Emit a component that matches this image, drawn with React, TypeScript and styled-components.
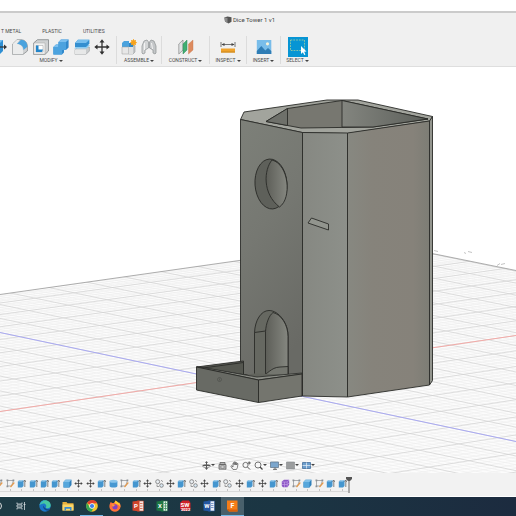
import React from "react";
import styled, { createGlobalStyle } from "styled-components";

const GlobalStyle = createGlobalStyle`
  * { box-sizing: border-box; }
  body { margin: 0; background: #fff; font-family: Roboto, "Liberation Sans", sans-serif; }
`;

const Page = styled.main`
  display: flex;
  flex-direction: column;
  height: 100vh;
  overflow: hidden;
  color: #4a4a4a;
`;

const Header = styled.header`
  margin-top: 11px;
  border-top: 2px solid #cbcbcb;
  border-bottom: 1px solid #dedede;
  background: #f0f0f0;
  flex: none;
`;

const TitleBar = styled.div`
  height: 13px;
  display: flex;
  align-items: center;
  justify-content: center;
  gap: 1px;
  padding-right: 17px;
`;

const Title = styled.h1`
  margin: 0;
  font-size: 6px;
  line-height: 8px;
  font-weight: 400;
  color: #444;
`;

const PlainButton = styled.button`
  border: 0;
  padding: 0;
  margin: 0;
  background: none;
  color: inherit;
  font-family: inherit;
  display: flex;
  align-items: center;
  justify-content: center;
  flex: none;
`;

const Tabs = styled.nav`
  height: 10px;
  display: flex;
  align-items: center;
  gap: 21px;
  padding-left: 1px;
`;

const Tab = styled(PlainButton)`
  font-size: 5px;
  line-height: 8px;
  white-space: nowrap;
`;

const Ribbon = styled.div`
  height: 30px;
  display: flex;
  align-items: flex-start;
  margin-left: -14px;
`;

const Group = styled.section<{ $width: number; $last?: boolean }>`
  flex: none;
  width: ${(p) => p.$width}px;
  height: 28px;
  padding-top: 1px;
  display: flex;
  flex-direction: column;
  align-items: center;
  border-right: 1px solid ${(p) => (p.$last ? "transparent" : "#dcdcdc")};
`;

const GroupTools = styled.div<{ $width?: number }>`
  height: 20px;
  flex: none;
  width: ${(p) => (p.$width ? p.$width + "px" : "auto")};
  display: flex;
  align-items: center;
  justify-content: space-between;
  gap: 4px;
`;

const GroupLabel = styled(PlainButton)`
  font-size: 5px;
  line-height: 7px;
  gap: 1px;
  white-space: nowrap;
`;

const Caret = styled.span`
  border: 2px solid transparent;
  border-top-color: #444;
  border-bottom: 0;
  height: 2px;
`;

const Viewport = styled.section`
  position: relative;
  flex: 1;
  min-height: 0;
  background: #fff;
`;

const Scene = styled.svg`
  display: block;
  width: 100%;
  height: 100%;
`;

const ViewTools = styled.div`
  position: absolute;
  left: 0;
  right: 0;
  bottom: 2px;
  height: 12px;
  display: flex;
  align-items: center;
  justify-content: center;
  gap: 3px;
`;

const ViewButton = styled(PlainButton)`
  gap: 0;
`;

const Timeline = styled.section`
  height: 24px;
  flex: none;
  background: #f2f2f2;
  border-bottom: 1px solid #fff;
  display: flex;
`;

const Features = styled.div`
  width: 355px;
  margin-left: -7px;
  flex: none;
  display: flex;
`;

const Feature = styled(PlainButton)`
  flex: 1;
  height: 19px;
  padding-top: 6px;
  flex-direction: column;
  justify-content: space-between;
  border-bottom: 1px solid #dadada;
`;

const Tick = styled.span`
  width: 1px;
  height: 2px;
  background: #c4c4c4;
`;

const Marker = styled(PlainButton)`
  width: 6px;
  margin-left: -2px;
  align-items: flex-start;
  padding-top: 4px;
`;

const Taskbar = styled.nav`
  height: 19px;
  flex: none;
  background: linear-gradient(90deg, #1d3b45, #1b3543 55%, #1c2b3f);
`;

const TaskItems = styled.div`
  width: 258px;
  height: 19px;
  margin-left: -14px;
  display: flex;
`;

const Task = styled(PlainButton)<{ $state?: "running" | "active" }>`
  flex: 1;
  background: ${(p) => (p.$state === "active" ? "#49606b" : "none")};
  border-bottom: ${(p) => (p.$state ? "1px solid #74b9e8" : "1px solid transparent")};
`;

/* ---------- ribbon icons ---------- */

const ribbonArt: Record<string, React.ReactNode> = {
  press: (
    <>
      <path d="M0 4l4-3h7v11l-3 3H0z" fill="#2f8fd3" />
      <path d="M0 4l4-3h7l-3 3z" fill="#74bdf0" />
      <path d="M8 8h5" stroke="#333" fill="none" strokeWidth="1.200" />
      <path d="M12 5.500L15 8l-3 2.500z" fill="#333" />
    </>
  ),
  fillet: (
    <>
      <path d="M.6 5L5 .8h4c4 0 6.400 3 6.400 7V12L11 15.400H.6z" fill="#cfd1d2" stroke="#7e8284" strokeWidth=".7" />
      <path d="M.8 5l4-4h3c-1 1-2 2-3 4 4 0 6.200 3 6.200 7v3.200H.8z" fill="#ebecec" />
      <path d="M9 .8c4 0 6.400 3 6.400 7L11.500 11C11.500 7.500 9 5 5 5z" fill="#4aa3de" />
    </>
  ),
  shell: (
    <>
      <path d="M.6 4L4.500.7h11V12L12 15.400H.6z" fill="#cfd1d2" stroke="#74797b" strokeWidth=".7" />
      <path d="M.8 4H12v11.200H.8z" fill="#f1f1f1" stroke="#999" strokeWidth=".4" />
      <path d="M3 6.500h7v6.500H3z" fill="#fff" stroke="#888" strokeWidth=".4" />
      <path d="M3 6.500l2.500 0V10.500H10L9 13H3z" fill="#2385ca" />
    </>
  ),
  combine: (
    <>
      <path d="M5.500 3L8 .6h7.600v8L13 11h-2v2.500L9 15.500H.4V8L3 5.500h2.500z" fill="#3189cc" />
      <path d="M5.500 3L8 .6h7.600L13 3zM.4 8L3 5.500h2.500V8z" fill="#7cc0ef" />
      <path d="M5.500 3H13v8H9v4.500H.4V8h5.100z" fill="#4ca3df" />
    </>
  ),
  split: (
    <>
      <path d="M1 10.500L4 8h11.400v4L12 15.400H1z" fill="#c9cccd" stroke="#8a8d8f" strokeWidth=".5" />
      <path d="M1 10.500h11v4.900H1z" fill="#e7e8e8" />
      <path d="M0 9.500L4 6h12l-3.500 3.500z" fill="#8accf3" />
      <path d="M1 4L4 .8h11.400v4L12 8H1z" fill="#348fd0" />
      <path d="M1 4L4 .8h11.400L12 4z" fill="#78bfee" />
    </>
  ),
  move: (
    <>
      <path d="M8 2v12M2 8h12" stroke="#333" strokeWidth="1.300" />
      <path d="M8 .3l2.500 3.200h-5zM8 15.700l2.500-3.200h-5zM.3 8l3.200-2.500v5zM15.700 8l-3.200-2.500v5z" fill="#2f2f2f" />
    </>
  ),
  component: (
    <>
      <path d="M1 4l2-2h5v6H1z" fill="#4ba2dd" />
      <path d="M1 8h6.500v7H1z" fill="#e7e7e7" stroke="#999" strokeWidth=".5" />
      <path d="M7.500 8L9 6.500h5V13l-2 2H7.500z" fill="#c3c6c8" stroke="#8b8e90" strokeWidth=".5" />
      <path d="M7.500 8H12v7H7.500z" fill="#e0e1e1" />
      <path d="M8 4h4v4H8z" fill="#2f87c8" />
      <circle cx="12.500" cy="3.600" r="2.500" fill="#f6a21b" />
      <path d="M12.500 0v7.200M9 3.600h7M10 1l5 5M15 1l-5 5" stroke="#f6a21b" strokeWidth=".8" />
    </>
  ),
  joint: (
    <>
      <path d="M1 14V7l2-5 3-1 1.500 2v6L4 11v3l-2 1z" fill="#d3d5d6" stroke="#8b8f91" strokeWidth=".7" />
      <path d="M15 14V7l-2-5-3-1-1.500 2v6L12 11v3l2 1z" fill="#c3c6c8" stroke="#8b8f91" strokeWidth=".7" />
      <path d="M3.500 4v7M10.500 4l1 6" stroke="#f4f4f4" />
    </>
  ),
  construct: (
    <>
      <path d="M.8 5L5 1v10L.8 15z" fill="#dfe2e3" stroke="#777" strokeWidth=".6" />
      <path d="M5 5l4-4v10l-4 4z" fill="#3fae72" stroke="#318858" strokeWidth=".5" />
      <path d="M10.500 5L15 1v10l-4.500 4z" fill="#dd8a5e" stroke="#c57649" strokeWidth=".4" />
    </>
  ),
  measure: (
    <>
      <path d="M1 3v5M15 3v5M2 5.500h12" stroke="#555" strokeWidth=".8" />
      <path d="M1.500 5.500l3-1.500v3zM14.500 5.500l-3-1.500v3z" fill="#444" />
      <path d="M1 9.500h14v4H1z" fill="#f0a32c" />
      <path d="M1 12.500h14v1H1z" fill="#c8861f" />
    </>
  ),
  image: (
    <>
      <path d="M.8 1h14.500v14H.8z" fill="#79bdea" />
      <circle cx="11.500" cy="4.800" r="1.600" fill="#f7f3d9" />
      <path d="M.8 12l4.500-5 4 4.500L12 9l3.300 3v3H.8z" fill="#2f7db5" />
    </>
  ),
  select: (
    <>
      <path d="M0 0h20v20H0z" fill="#0795d4" />
      <path d="M2.500 3h14v10.500h-14z" fill="none" stroke="#a8cfa0" strokeWidth=".8" strokeDasharray="1.800 1" />
      <path d="M13 9l5.500 5.500-2.400.2 1.300 2.700-1.200.6-1.300-2.700L13 17z" fill="#fff" />
    </>
  ),
};

function RibbonIcon({ name }: { name: string }) {
  const size = name === "select" ? 20 : 16;
  return (
    <svg width={size} height={size} viewBox={`0 0 ${size} ${size}`} aria-hidden="true">
      {ribbonArt[name]}
    </svg>
  );
}

const groups = [
  { label: "MODIFY", width: 131, toolsWidth: 118, tools: ["press", "fillet", "shell", "combine", "split", "move"] },
  { label: "ASSEMBLE", width: 45, tools: ["component", "joint"] },
  { label: "CONSTRUCT", width: 48, tools: ["construct"] },
  { label: "INSPECT", width: 37, tools: ["measure"] },
  { label: "INSERT", width: 34, tools: ["image"] },
  { label: "SELECT", width: 34, tools: ["select"] },
];

/* ---------- scene ---------- */

const redLeft = (k: number) => 411 + 15.8 * k + 0.28 * k * k;
const redRight = (k: number) => 335 + 15 * k + 0.26 * k * k;
const blueLeft = (m: number) => 332 + 14.2 * m + 0.1 * m * m;
const blueRight = (m: number) => 441 + 14.4 * m + 0.1 * m * m;

function gridPath(major: boolean) {
  const parts: string[] = [];
  const sweep = (from: number, to: number, l: (n: number) => number, r: (n: number) => number) => {
    for (let i = from * 5; i <= to * 5; i++) {
      if ((i % 5 === 0) !== major) continue;
      parts.push(`M0 ${l(i / 5).toFixed(1)}L516 ${r(i / 5).toFixed(1)}`);
    }
  };
  sweep(-9, 9, redLeft, redRight);
  sweep(-13, 10, blueLeft, blueRight);
  return parts.join("");
}

const minorGrid = gridPath(false);
const majorGrid = gridPath(true);

function DiceTower() {
  return (
    <Scene viewBox="0 66 516 407" preserveAspectRatio="xMidYMid slice" role="img" aria-label="Dice tower model">
      <defs>
        <clipPath id="ground">
          <path d="M0 294L373 241L516 270V473H0z" />
        </clipPath>
        <linearGradient id="leftFace" x1="0" y1="0" x2=".3" y2="1">
          <stop offset="0" stopColor="#7d8079" />
          <stop offset=".45" stopColor="#767872" />
          <stop offset="1" stopColor="#696a65" />
        </linearGradient>
        <linearGradient id="midFace" x1="0" y1="0" x2="1" y2="0">
          <stop offset="0" stopColor="#868882" />
          <stop offset="1" stopColor="#8d908a" />
        </linearGradient>
        <linearGradient id="rightFace" x1="0" y1="0" x2="1" y2="0">
          <stop offset="0" stopColor="#878881" />
          <stop offset=".3" stopColor="#86837b" />
          <stop offset=".8" stopColor="#86827a" />
          <stop offset="1" stopColor="#7d7d75" />
        </linearGradient>
        <linearGradient id="bore" x1="0" y1="0" x2="1" y2="0">
          <stop offset="0" stopColor="#5d5e58" />
          <stop offset="1" stopColor="#858780" />
        </linearGradient>
        <linearGradient id="innerBack" x1="0" y1="0" x2="1" y2="0">
          <stop offset="0" stopColor="#83857f" />
          <stop offset="1" stopColor="#5c5f5a" />
        </linearGradient>
      </defs>
      <rect y="66" width="516" height="407" fill="#fff" />
      <g clipPath="url(#ground)" fill="none">
        <rect y="230" width="516" height="243" fill="#fcfcfc" />
        <path d={minorGrid} stroke="#ececec" strokeWidth=".6" />
        <path d={majorGrid} stroke="#d0d0d0" strokeWidth=".7" />
        <path d="M0 411L516 335" stroke="#f3aaa7" />
        <path d="M0 332L516 441" stroke="#a9a9f2" />
      </g>
      <path d="M0 294L373 241L516 270" fill="none" stroke="#999" strokeWidth=".8" />
      <path d="M434 250l4 1M464 252l2 1M468 251l4 1M497 265l3-2M501 264l4-1" fill="none" stroke="#aaa" strokeWidth=".7" />

      <g stroke="#2a2b28" strokeWidth=".9" strokeLinejoin="round">
        <path d="M240.500 119L244 111.500L327 99.500H358L432.500 116L430 120.500L347.500 133L302 132z" fill="#a2a49d" />
        <path d="M266 121L287.500 108L342 100L428 118.500L373 126.500L301 127.500z" fill="#777770" />
        <path d="M266 121L287.500 108V125z" fill="#6e706a" />
        <path d="M342 100L428 118.500L373 126.500H342z" fill="url(#innerBack)" />
        <path d="M240.500 119L302.500 132V395.500L240.500 382z" fill="url(#leftFace)" />
        <path d="M302.500 132L347.500 132.500V396.500L302.500 395.500z" fill="url(#midFace)" />
        <path d="M347.500 132.500L429.500 120.500V384.500L347.500 396.500z" fill="url(#rightFace)" />
        <path d="M429.500 120.500L432.500 116V380L429.500 384.500z" fill="#93958e" />
        <ellipse cx="271" cy="183.500" rx="16" ry="25" transform="rotate(-4 271 183.500)" fill="#5e605a" />
        <path d="M272 159.500C264 169 262 193 279.500 206.500C292 198 289 164 272 159.500z" fill="url(#bore)" />
        <path d="M308 222.500L311.500 217.500L328.500 223.500V229.500z" fill="#92958e" />

        <path d="M254.500 376V332C255 320 261 310 269 310C279 310 288 323 288 335V374z" fill="#666861" />
        <path d="M265.500 374V331C266 323 269 315 273 312C281 314 288 324 288 336V374z" fill="url(#bore)" />
        <path d="M254.500 332L265.500 330.500" />
        <path d="M258 377C269 374 270 367 280 366.500L288 366V375z" fill="#74766f" />

        <path d="M196.500 366.500L243.500 360.500V376L257 378L302 373L258.500 379.500z" fill="#5a5c56" />
        <path d="M203 367.500L243.500 362V374L257.500 376.500z" fill="#555750" />
        <path d="M243.500 375L254 373L288 374L302 373L258 378z" fill="#62645d" stroke="none" />
        <path d="M196.500 366.500L203 367L257 376.500L302 372.500V373.500L258.500 379.500z" fill="#8b8d86" strokeWidth=".8" />
        <path d="M196.500 366.500L258.500 379.500V402L196.500 389.500z" fill="#686a64" />
        <path d="M258.500 379.500L302 373.500V395.500L258.500 402z" fill="#74756e" />
      </g>
      <circle cx="219.500" cy="379" r="2" fill="none" stroke="#4a4b48" strokeWidth=".6" />
      <path d="M219.500 378v2" stroke="#4a4b48" strokeWidth=".6" />
    </Scene>
  );
}

/* ---------- view tools ---------- */

const viewArt: Record<string, React.ReactNode> = {
  orbit: (
    <>
      <path d="M4.500 1v7M1 4.500h7" stroke="#555" strokeWidth="1" />
      <path d="M4.500 0L6 2H3zM4.500 9L6 7H3z" fill="#555" />
      <ellipse cx="4.500" cy="5" rx="4" ry="1.500" fill="none" stroke="#666" strokeWidth=".7" />
    </>
  ),
  look: (
    <>
      <path d="M1 3.500h7v4.700H1zM2 1.500h5v2H2z" fill="#b5b5b5" stroke="#666" strokeWidth=".8" />
      <path d="M3 5h3v2H3z" fill="#eee" stroke="#666" strokeWidth=".5" />
    </>
  ),
  pan: (
    <path d="M3 8.500L.8 5.200l1-.5L3 6V2l1-.2.2 2V1l1-.2.2 3L5.700 1.500l.9.100V4l.5-1.500.9.200-.6 4-1 1.800z" fill="#f3f3f3" stroke="#555" strokeWidth=".7" />
  ),
  zoom: (
    <>
      <circle cx="3.500" cy="4" r="2.600" fill="none" stroke="#666" strokeWidth=".9" />
      <path d="M5.500 6L8 8.500M7.200.5v3M5.800 2h3" stroke="#555" strokeWidth="1" />
    </>
  ),
  fit: (
    <>
      <circle cx="4" cy="4" r="3" fill="#f8f8f8" stroke="#666" strokeWidth=".9" />
      <path d="M6 6l2.500 2.500" stroke="#444" strokeWidth="1.300" />
    </>
  ),
  display: (
    <>
      <path d="M.5 1h8v5.500h-8z" fill="#7ba6cd" stroke="#667b91" strokeWidth=".8" />
      <path d="M3 8.300h4M5 6.500v2" stroke="#666" />
    </>
  ),
  effects: <path d="M.5 1h8v7h-8z" fill="#9b9d9e" stroke="#85888a" strokeWidth=".6" />,
  viewports: (
    <>
      <path d="M.5 1.500h8v6h-8z" fill="#6b9dcc" stroke="#456f9c" strokeWidth=".8" />
      <path d="M4.500 1.500v6M.5 4.500h8" stroke="#e8f0f8" strokeWidth=".7" />
    </>
  ),
};

const viewTools: [string, boolean][] = [
  ["orbit", true],
  ["look", false],
  ["pan", false],
  ["zoom", false],
  ["fit", true],
  ["display", true],
  ["effects", true],
  ["viewports", true],
];

/* ---------- timeline ---------- */

const featureArt: Record<string, React.ReactNode> = {
  sketch: (
    <>
      <path d="M1.500 1.500h6l-2 5.500h-4z" fill="none" stroke="#8a8d90" strokeWidth=".7" />
      <path d="M.5.500h1.800v1.800H.5zM6.500.500h1.800v1.800H6.500zM.5 6.500h1.800v1.800H.5z" fill="#8a9095" />
      <path d="M4.500 8L8.300 3.500" stroke="#e59a4c" strokeWidth="1.200" />
    </>
  ),
  extrude: (
    <>
      <path d="M.8 2.500L2.500 1H6.500v6L5 8.500H.8z" fill="#4596cf" />
      <path d="M.8 2.500L2.500 1H6.500L5 2.500z" fill="#9ccbeb" />
      <path d="M7.800 8V2.500M6.700 3L7.800 1l1 2" stroke="#555" strokeWidth=".7" fill="none" />
    </>
  ),
  box: (
    <>
      <path d="M.5 3L2.500.700h6V6L6.500 8.500h-6z" fill="#2f7fb9" />
      <path d="M.5 3h6v5.500h-6z" fill="#56a7dc" />
      <path d="M.5 3L2.500.700h6L6.500 3z" fill="#83c1e9" />
    </>
  ),
  cylinder: (
    <>
      <path d="M.6 2.300v4.600c0 2 7.800 2 7.800 0V2.300z" fill="#4798d2" />
      <ellipse cx="4.500" cy="2.300" rx="3.900" ry="1.500" fill="#8bc5eb" />
    </>
  ),
  move: (
    <>
      <path d="M4.500 1.500v6M1.500 4.500h6" stroke="#444" strokeWidth=".8" />
      <path d="M4.500.300L6 2.200H3zM4.500 8.700L6 6.800H3zM.3 4.500L2.200 3v3zM8.700 4.500L6.800 3v3z" fill="#444" />
    </>
  ),
  link: (
    <>
      <circle cx="2.700" cy="2.700" r="2" fill="#e9eef2" stroke="#777" strokeWidth=".8" />
      <circle cx="6.500" cy="6.500" r="1.800" fill="#d8e7f2" stroke="#777" strokeWidth=".8" />
      <path d="M2 5.500v2h2M6 1.200l2 1.500" stroke="#777" strokeWidth=".7" fill="none" />
    </>
  ),
  form: (
    <>
      <path d="M.8 2.500L3 .700h5.200v5L6.500 8.300H2L.8 7z" fill="#8b56c5" />
      <path d="M.8 3h5.400v5M6.200 3L8 1M.8 5.500h5.400l2-1.500M3.500 3v5" stroke="#c9a5ea" strokeWidth=".6" fill="none" />
    </>
  ),
};

const features =
  "sketch sketch extrude extrude extrude extrude box move move extrude cylinder sketch extrude move link move extrude link move extrude link move extrude move extrude form sketch box sketch extrude extrude".split(
    " "
  );

/* ---------- taskbar ---------- */

type TaskEntry = { name: string; state?: "running" | "active"; art: React.ReactNode };

const officeText = { fontFamily: "Roboto, sans-serif", fontWeight: 700, fill: "#fff" };

const tasks: TaskEntry[] = [
  { name: "Search", art: <circle cx="6" cy="6" r="3.500" fill="none" stroke="#ddd" /> },
  {
    name: "Task View",
    art: (
      <path d="M2 2.500v1.500h5V2.500M2 9.500V8h5v1.500M2 5h5v2H2zM9.500 2v8M8.500 4.500h2" fill="none" stroke="#d4dcdf" strokeWidth=".8" />
    ),
  },
  {
    name: "Edge",
    art: (
      <>
        <circle cx="6" cy="6" r="5.700" fill="#1b77c9" />
        <path d="M.4 5.500C1 2 3.500.300 6 .300c3.500 0 5.700 2.500 5.700 5 0 2-1.500 3-3.200 3-1.400 0-2-.6-1.500-1.300C8 5.500 6.500 3.500 4.500 3.500c-2 0-3.400 1-4.100 2z" fill="#46c8a2" />
        <path d="M.4 5.500C1 2 3.500.300 6 .300 5 .500 2 3 .4 5.500z" fill="#2ba7dd" />
        <path d="M4.500 5.500c-1 2 .5 5 4.500 5.300 1-.6 1.700-1.300 2-2-2 1-5.500.2-6.500-3.300z" fill="#12498b" />
      </>
    ),
  },
  {
    name: "File Explorer",
    art: (
      <>
        <path d="M.5 2h4l1 1.200h6V10.500H.5z" fill="#e8b13c" />
        <path d="M.5 4.500h11v6H.5z" fill="#fbd768" />
        <path d="M2.500 7h7v3.500H8V8.800H4v1.700H2.500z" fill="#3a8dce" />
      </>
    ),
  },
  {
    name: "Chrome",
    state: "running",
    art: (
      <>
        <circle cx="6" cy="6" r="5.800" fill="#f5c52d" />
        <path d="M6 6L1 3a5.800 5.800 0 0 1 10.200.3L6 3.500z" fill="#e2402f" />
        <path d="M1 3a5.800 5.800 0 0 0 4.500 8.800L8 7 4 7.500z" fill="#35a753" />
        <circle cx="6" cy="6" r="2.700" fill="#fff" />
        <circle cx="6" cy="6" r="2.100" fill="#3f80e8" />
      </>
    ),
  },
  {
    name: "Firefox",
    art: (
      <>
        <path d="M6.500.500c1 1 1.500 1.500 3 2.500l.7-.5C11.500 4 11.800 5.500 11.500 7 11 10 8.500 11.700 6 11.700 3 11.700.5 9.500.4 6.500.4 4.500 1 3 2 1.700l.8 1.300L5 3z" fill="#ff7139" />
        <path d="M6.500.500C8.500 2 11.500 3 11.300 7 10.500 5 9 4.500 8 4.300L5.500 3z" fill="#ffca2f" />
        <circle cx="6" cy="6.800" r="2.600" fill="#8142c4" />
        <path d="M2.500 4.500C4 4 5 4.500 6.500 5.200 5 5.500 4.500 6 4 7z" fill="#ff9b36" />
      </>
    ),
  },
  {
    name: "PowerPoint",
    art: (
      <>
        <path d="M5 1h6.500v10H5z" fill="#f3e6e2" stroke="#c94b32" strokeWidth=".6" />
        <path d="M8 3.500h2.500M8 6h2.500M8 8.500h2.500" stroke="#d35a3f" strokeWidth=".8" />
        <path d="M.5 1.500L7.500.500v11l-7-1z" fill="#d0432a" />
        <text x="2" y="8.300" fontSize="6" {...officeText}>P</text>
      </>
    ),
  },
  {
    name: "Excel",
    art: (
      <>
        <path d="M5 1h6.500v10H5z" fill="#e5f0e8" stroke="#217346" strokeWidth=".6" />
        <path d="M8 3.500h3M8 6h3M8 8.500h3M9.500 1.500v9" stroke="#2f8b58" strokeWidth=".7" />
        <path d="M.5 1.500L7.500.500v11l-7-1z" fill="#1d7544" />
        <text x="2" y="8.300" fontSize="6" {...officeText}>X</text>
      </>
    ),
  },
  {
    name: "SolidWorks 2022",
    art: (
      <>
        <path d="M1 3L3.500.500H10L11.500 3v6L9.500 11H3L1 8.500z" fill="#cf2029" />
        <text x="1.500" y="6.800" fontSize="6" {...officeText}>SW</text>
        <text x="2" y="11.200" fontSize="4" {...officeText}>2022</text>
      </>
    ),
  },
  {
    name: "Word",
    art: (
      <>
        <path d="M5 1h6.500v10H5z" fill="#e9eef7" stroke="#2a579a" strokeWidth=".6" />
        <path d="M8 3.500h2.500M8 5.500h2.500M8 7.500h2.500" stroke="#4a76b8" strokeWidth=".7" />
        <path d="M.5 1.500L7.500.500v11l-7-1z" fill="#2356a2" />
        <text x="1.200" y="8.200" fontSize="6" {...officeText}>W</text>
      </>
    ),
  },
  {
    name: "Fusion 360",
    state: "active",
    art: (
      <>
        <path d="M1 .500h10.500v11H3L1 9.500z" fill="#f57c17" />
        <path d="M1 9.500h2v2z" fill="#a34a08" />
        <path d="M1 9.500h10.500v2H3z" fill="#d9600a" />
        <text x="4.500" y="7.800" fontSize="7" {...officeText}>F</text>
      </>
    ),
  },
];

export default function App() {
  return (
    <Page>
      <GlobalStyle />
      <Header>
        <TitleBar>
          <svg width="8" height="8" viewBox="0 0 8 8" aria-hidden="true">
            <path d="M.4 1.500L3.500.500l4 .8v4.500L4.500 7.500 1 5.500z" fill="#555" />
            <path d="M.4 1.500L3.500 2v5L1 5.500z" fill="#8c8c8c" />
          </svg>
          <Title>Dice Tower 1 v1</Title>
        </TitleBar>
        <Tabs aria-label="Workspace tabs">
          <Tab>T METAL</Tab>
          <Tab>PLASTIC</Tab>
          <Tab>UTILITIES</Tab>
        </Tabs>
        <Ribbon>
          {groups.map((g, i) => (
            <Group key={g.label} $width={g.width} $last={i === groups.length - 1}>
              <GroupTools $width={g.toolsWidth}>
                {g.tools.map((t) => (
                  <PlainButton key={t} aria-label={t}>
                    <RibbonIcon name={t} />
                  </PlainButton>
                ))}
              </GroupTools>
              <GroupLabel>
                {g.label}
                <Caret />
              </GroupLabel>
            </Group>
          ))}
        </Ribbon>
      </Header>

      <Viewport>
        <DiceTower />
        <ViewTools>
          {viewTools.map(([name, menu]) => (
            <ViewButton key={name} aria-label={name}>
              <svg width="9" height="9" viewBox="0 0 9 9" aria-hidden="true">
                {viewArt[name]}
              </svg>
              {menu && <Caret />}
            </ViewButton>
          ))}
        </ViewTools>
      </Viewport>

      <Timeline aria-label="Timeline">
        <Features>
          {features.map((name, i) => (
            <Feature key={i} aria-label={name}>
              <svg width="9" height="9" viewBox="0 0 9 9" aria-hidden="true">
                {featureArt[name]}
              </svg>
              <Tick />
            </Feature>
          ))}
        </Features>
        <Marker aria-label="Timeline position">
          <svg width="6" height="16" viewBox="0 0 6 16" aria-hidden="true">
            <path d="M0 0h6v2L4 4H2L0 2z" fill="#555" />
            <path d="M3 3v13" stroke="#666" />
          </svg>
        </Marker>
      </Timeline>

      <Taskbar aria-label="Taskbar">
        <TaskItems>
          {tasks.map((t) => (
            <Task key={t.name} $state={t.state} aria-label={t.name}>
              <svg width="12" height="12" viewBox="0 0 12 12" aria-hidden="true">
                {t.art}
              </svg>
            </Task>
          ))}
        </TaskItems>
      </Taskbar>
    </Page>
  );
}
